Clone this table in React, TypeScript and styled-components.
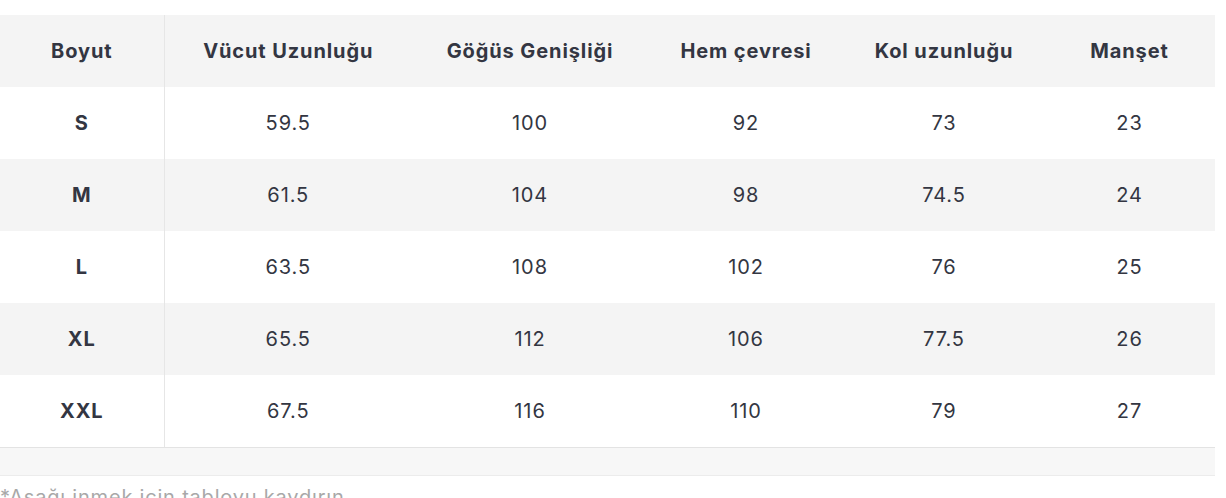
import React from "react";
import styled, { createGlobalStyle } from "styled-components";

const GlobalStyle = createGlobalStyle`
  html, body {
    margin: 0;
    padding: 0;
    background: #ffffff;
    font-family: Inter, "Noto Sans", "Liberation Sans", sans-serif;
  }
`;

interface SizeRow {
  size: string;
  values: string[];
}

const headers = [
  "Boyut",
  "Vücut Uzunluğu",
  "Göğüs Genişliği",
  "Hem çevresi",
  "Kol uzunluğu",
  "Manşet",
];

const columnWidths = [164, 248, 236, 196, 200, 171];

const rows: SizeRow[] = [
  { size: "S", values: ["59.5", "100", "92", "73", "23"] },
  { size: "M", values: ["61.5", "104", "98", "74.5", "24"] },
  { size: "L", values: ["63.5", "108", "102", "76", "25"] },
  { size: "XL", values: ["65.5", "112", "106", "77.5", "26"] },
  { size: "XXL", values: ["67.5", "116", "110", "79", "27"] },
];

const Page = styled.div`
  padding-top: 15px;
  height: 483px;
  overflow: hidden;
`;

const TableWrap = styled.div`
  width: 1215px;
`;

const Table = styled.table`
  width: 1215px;
  border-collapse: collapse;
  table-layout: fixed;
  color: #333642;
`;

const Row = styled.tr<{ $shaded: boolean }>`
  height: 72px;
  background: ${(p) => (p.$shaded ? "#f4f4f4" : "#ffffff")};
`;

const HeadCell = styled.th<{ $first?: boolean }>`
  padding: 0;
  font-size: 20px;
  font-weight: 700;
  letter-spacing: 0.9px;
  text-align: center;
  border-right: ${(p) => (p.$first ? "1px solid #e6e6e6" : "none")};
`;

const Cell = styled.td<{ $first?: boolean }>`
  padding: 0;
  font-size: 20px;
  font-weight: ${(p) => (p.$first ? 700 : 400)};
  letter-spacing: 0.9px;
  text-align: center;
  border-right: ${(p) => (p.$first ? "1px solid #e6e6e6" : "none")};
`;

const ScrollTrack = styled.div`
  height: 27px;
  background: #f7f7f7;
  border-top: 1px solid #e3e3e3;
  border-bottom: 1px solid #ececec;
`;

const Note = styled.p`
  margin: 9px 0 0;
  font-size: 20px;
  line-height: 24px;
  letter-spacing: 0.8px;
  color: #a8a8a8;
`;

export default function App() {
  return (
    <Page>
      <GlobalStyle />
      <TableWrap>
        <Table>
          <colgroup>
            {columnWidths.map((w, i) => (
              <col key={i} style={{ width: w }} />
            ))}
          </colgroup>
          <thead>
            <Row $shaded>
              {headers.map((h, i) => (
                <HeadCell key={h} $first={i === 0}>
                  {h}
                </HeadCell>
              ))}
            </Row>
          </thead>
          <tbody>
            {rows.map((r, i) => (
              <Row key={r.size} $shaded={i % 2 === 1}>
                <Cell $first>{r.size}</Cell>
                {r.values.map((v, j) => (
                  <Cell key={j}>{v}</Cell>
                ))}
              </Row>
            ))}
          </tbody>
        </Table>
        <ScrollTrack />
      </TableWrap>
      <Note>*Aşağı inmek için tabloyu kaydırın</Note>
    </Page>
  );
}
